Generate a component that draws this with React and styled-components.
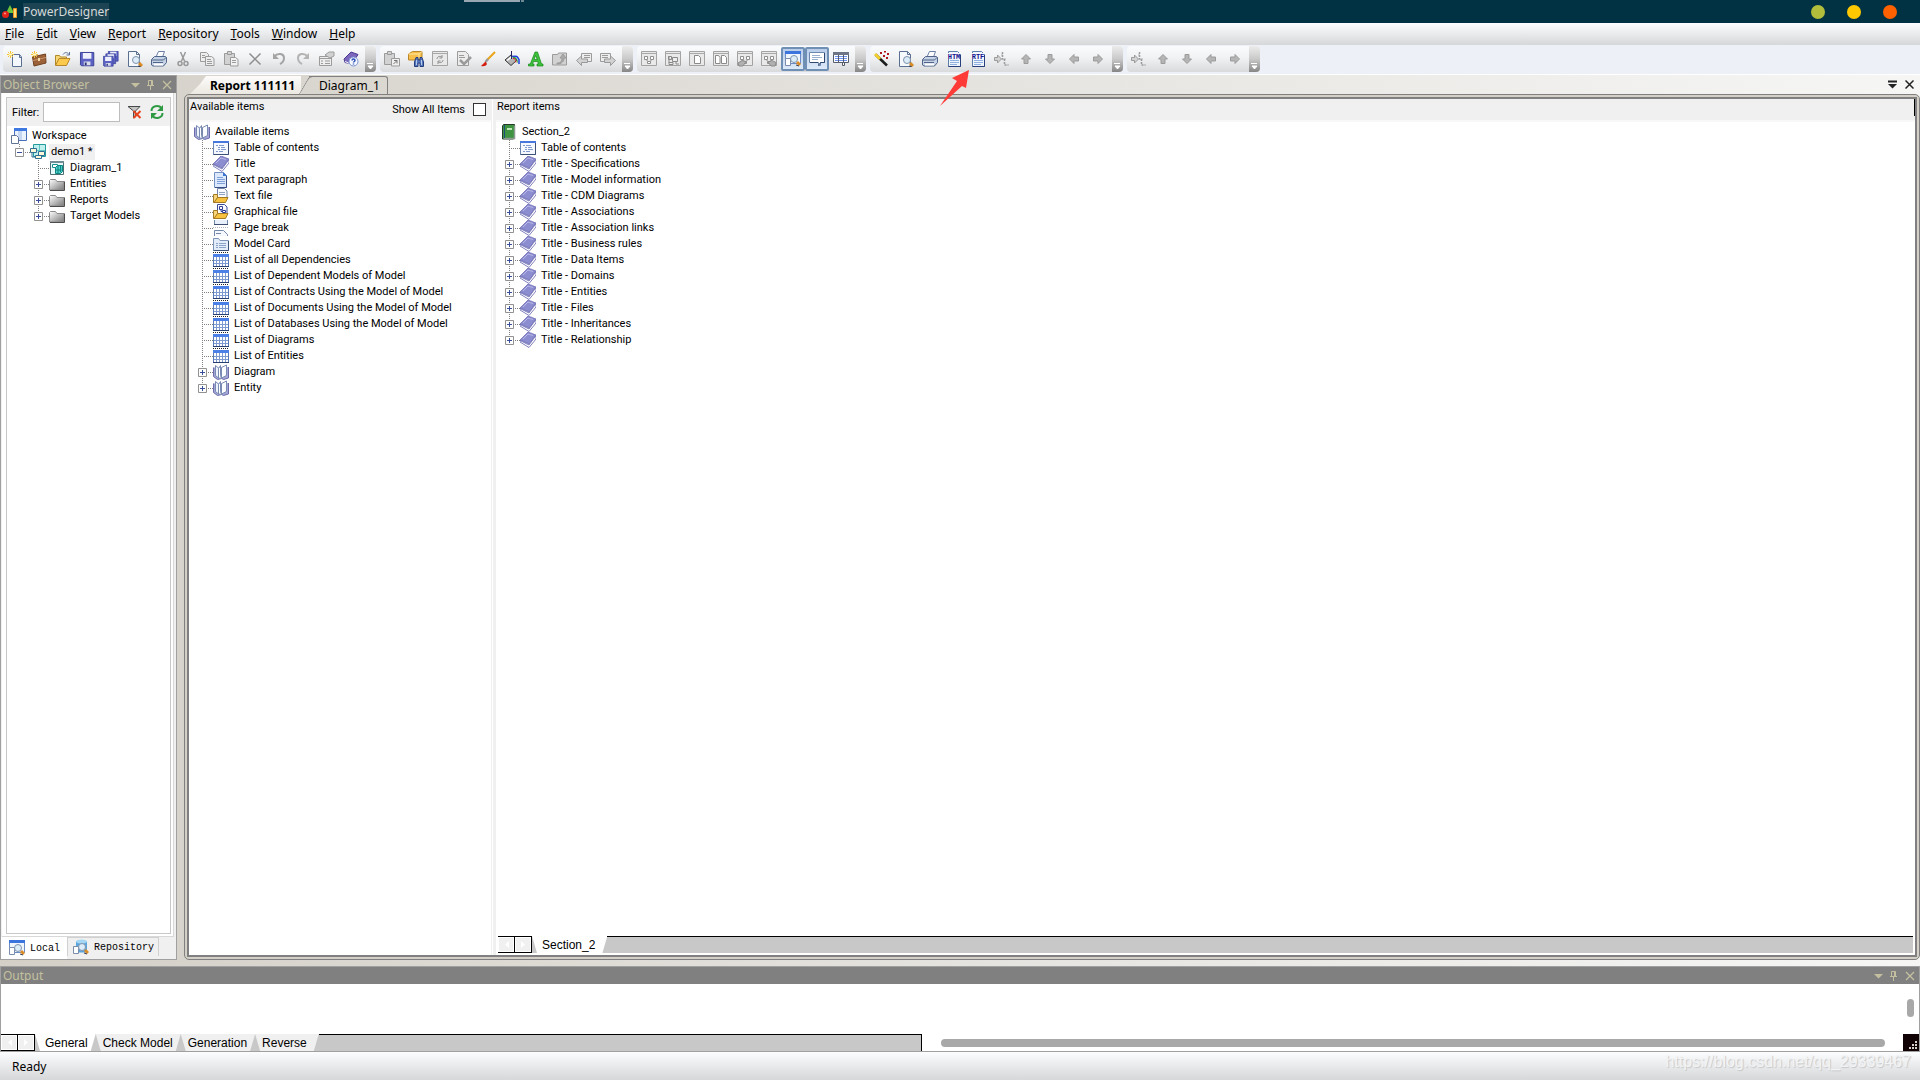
import { useState } from "react";
import styled, { createGlobalStyle, css } from "styled-components";

const GlobalStyle = createGlobalStyle`
  * {
    box-sizing: border-box;
  }
  body {
    margin: 0;
    overflow: hidden;
    background-color: #edf0f6;
    font-family: "Noto Sans", "Open Sans", sans-serif;
    font-size: 12px;
    color: #000;
  }
  button, input {
    font: inherit;
    color: inherit;
    margin: 0;
    padding: 0;
    border: none;
    background: none;
  }
  ul {
    list-style: none;
    margin: 0;
    padding: 0;
  }
  svg {
    display: block;
    flex: none;
  }
`;

const Wrapper = styled.div`
  position: relative;
  display: flex;
  flex-direction: column;
  min-height: 100vh;
`;

/* title bar */

const TitleBar = styled.header`
  display: flex;
  align-items: center;
  height: 23px;
  padding: 0 23px 0 2px;
  background-color: #003243;
  gap: 5px;
`;

const AppTitle = styled.h1`
  margin: 0 auto 0 0;
  font-size: 12px;
  line-height: 17px;
  font-weight: 400;
  color: #d5dadb;
  background-color: #1d4452;
`;

const Dots = styled.div`
  display: flex;
  gap: 22px;
`;

const Dot = styled.button`
  width: 14px;
  height: 14px;
  border-radius: 50%;
  background-color: ${({ $color }) => $color};
`;

const TopHandle = styled.span`
  position: absolute;
  top: 0;
  left: 464px;
  width: 60px;
  height: 2px;
  background: linear-gradient(90deg, #99a8b0 56px, #003243 56px 57px, #6c8791 57px);
`;

/* menu and tool bars */

const MenuBar = styled.nav`
  display: flex;
  align-items: center;
  height: 22px;
  background: linear-gradient(#fcfdfe, #d6d7d9);
`;

const MenuItem = styled.button`
  padding: 0 7px 0 5px;
  line-height: 22px;
`;

const ToolRow = styled.div`
  display: flex;
  gap: 4px;
  height: 30px;
  padding: 1px 3px 2px;
  border-bottom: 1px solid #fff;
`;

const ToolBar = styled.div`
  display: flex;
  align-items: center;
  border-radius: 4px;
  overflow: hidden;
  background: linear-gradient(#fafbfc, #f1f2f4 45%, #d9dadc);
`;

const ToolButton = styled.button`
  display: grid;
  place-items: center;
  width: 24px;
  height: 24px;
  ${({ $on }) =>
    $on &&
    css`
      border: 2px solid #6f8fb5;
      border-radius: 2px;
      background: linear-gradient(#b9cdea, #dce9f8);
    `}
`;

const Overflow = styled.button`
  display: grid;
  place-items: end center;
  align-self: stretch;
  width: 11px;
  margin-left: 2px;
  padding-bottom: 2px;
  background: linear-gradient(#ececec, #c9c9c9 50%, #868686);
`;

const RedArrow = styled.svg`
  position: absolute;
  left: 939px;
  top: 69px;
`;

/* main area */

const Main = styled.main`
  flex: 1;
  display: flex;
  gap: 7px;
  padding-bottom: 6px;
  background: linear-gradient(90deg, #d4d0c8, #f6f6f5);
`;

const Browser = styled.aside`
  display: flex;
  flex-direction: column;
  width: 177px;
  border: 1px solid #a0a0a0;
  background-color: #f0f0f0;
`;

const PanelHeader = styled.div`
  display: flex;
  align-items: center;
  height: 17px;
  padding: 0 4px 0 2px;
  background-color: #808080;
  color: #c4c09f;
  h2 {
    flex: 1;
    margin: 0;
    font-size: 12px;
    font-weight: 400;
    line-height: 17px;
  }
`;

const PanelButtons = styled.div`
  display: flex;
  align-items: center;
  gap: 6px;
`;

const BrowserBody = styled.div`
  flex: 1;
  display: flex;
  margin: 0 2px 0 1px;
  padding: 4px 2px 2px 4px;
  border-right: 1px solid #d8d8d8;
  border-bottom: 1px solid #d8d8d8;
  background-color: #fff;
`;

const BrowserBox = styled.div`
  flex: 1;
  border: 1px solid #c8c8c8;
`;

const FilterBar = styled.div`
  display: flex;
  align-items: center;
  height: 28px;
  padding-left: 5px;
  background-color: #f0f0f0;
  font-family: Roboto, "Liberation Sans", sans-serif;
  font-size: 11px;
  label {
    width: 31px;
  }
  input {
    width: 77px;
    height: 20px;
    margin-right: 7px;
    padding: 0 4px;
    border: 1px solid #bdbdbd;
    background-color: #fff;
  }
  button + button {
    margin-left: 6px;
  }
`;

const BrowserTabs = styled.div`
  display: flex;
  height: 22px;
`;

const BrowserTab = styled.button`
  display: flex;
  align-items: center;
  gap: 5px;
  padding: 0 4px 0 8px;
  font-family: "Liberation Mono", monospace;
  font-size: 10px;
  background-color: #fff;
  ${({ $active }) =>
    $active
      ? css`
          padding-right: 7px;
        `
      : css`
          margin-bottom: 3px;
          padding-left: 5px;
          border: solid #d0d0d0;
          border-width: 1px 1px 0 1px;
          background-color: #f0f0f0;
        `}
`;

/* trees */

const Tree = styled.ul`
  padding: 2px 0 0 ${({ $indent }) => $indent};
  font-family: Roboto, "Liberation Sans", sans-serif;
  font-size: 11px;
`;

const TreeRow = styled.li`
  display: flex;
  height: 16px;
  line-height: 16px;
  white-space: nowrap;
`;

const Branch = styled.span`
  display: flex;
  align-items: center;
  width: 19px;
  padding-left: 4px;
  ${({ $line, $last }) =>
    $line &&
    css`
      background-image: repeating-linear-gradient(#808080 0 1px, transparent 1px 2px),
        repeating-linear-gradient(90deg, #808080 0 1px, transparent 1px 2px);
      background-size: 1px ${$last ? "8px" : "100%"}, 11px 1px;
      background-position: 8px 0, 8px 8px;
      background-repeat: no-repeat;
    `}
`;

const Expander = styled.button`
  height: 9px;
  background-color: #fff;
`;

const Label = styled.span`
  margin-left: 3px;
  padding: 0 2px;
  background-color: ${({ $marked }) => ($marked ? "#f0f0f0" : "transparent")};
`;

/* document */

const Document = styled.section`
  flex: 1;
  display: flex;
  flex-direction: column;
  min-width: 0;
`;

const DocTabs = styled.div`
  display: flex;
  align-items: flex-end;
  height: 19px;
  padding: 0 6px;
`;

const ActiveTab = styled.button`
  height: 18px;
  padding: 0 6px 0 20px;
  line-height: 17px;
  font-weight: 700;
  background: linear-gradient(#fdfcfb, #ece8e1);
  clip-path: polygon(16px 0, 100% 0, 100% 100%, 0 100%, 10px 8px);
`;

const IdleTab = styled.button`
  position: relative;
  height: 18px;
  margin-left: 8px;
  padding: 0 7px 0 10px;
  line-height: 17px;
  border: solid #808080;
  border-width: 1px 1px 0 0;
  border-radius: 0 3px 0 0;
  &::before {
    content: "";
    position: absolute;
    top: -1px;
    left: -5px;
    width: 8px;
    height: 17px;
    border: solid #808080;
    border-width: 1px 0 0 1px;
    border-radius: 4px 0 0 0;
    transform: skewX(-30deg);
  }
`;

const DocTools = styled.div`
  display: flex;
  align-items: center;
  align-self: center;
  gap: 8px;
  margin-left: auto;
`;

const DocFrame = styled.div`
  flex: 1;
  display: flex;
  padding: 2px;
  border: 1px solid #808080;
  border-radius: 5px;
  background-color: #d4d0c8;
`;

const DocBody = styled.div`
  flex: 1;
  display: flex;
  border: 2px solid #808080;
  background-color: #fff;
`;

const Pane = styled.div`
  display: flex;
  flex-direction: column;
  ${({ $grow }) =>
    $grow
      ? css`
          flex: 1;
          border-left: 3px solid #f0f0f0;
        `
      : css`
          width: 303px;
          border-right: 1px solid #f0f0f0;
          margin-right: 1px;
        `}
`;

const PaneHeader = styled.div`
  display: flex;
  justify-content: space-between;
  height: 23px;
  padding-left: 1px;
  padding-right: ${({ $check }) => ($check ? "5px" : "0")};
  border-bottom: 2px solid #f8f8f8;
  background-color: #f0f0f0;
  font-family: Roboto, "Liberation Sans", sans-serif;
  font-size: 11px;
  line-height: 16px;
`;

const CheckLabel = styled.label`
  display: flex;
  align-items: center;
  gap: 8px;
  input {
    appearance: none;
    width: 13px;
    height: 13px;
    border: 1px solid #333;
    background-color: #fff;
    &:checked {
      background-color: #333;
      box-shadow: inset 0 0 0 2px #fff;
    }
  }
`;

const Caret = styled.span`
  width: 1px;
  height: 17px;
  background-color: #000;
`;

/* sheet tabs, shared by the report and the output */

const SheetBar = styled.div`
  display: flex;
  height: 17px;
  background-color: #c8c8c8;
  font-family: "Liberation Sans", Arial, sans-serif;
  ${Pane} & {
    margin: auto 2px 2px;
  }
`;

const SheetArrow = styled.button`
  display: grid;
  place-items: center;
  width: 17px;
  border: solid #000;
  border-width: 1px 1px 1px 0;
  background-color: #f0f0f0;
  box-shadow: inset 0 0 0 1px #fff;
`;

const SheetTab = styled.button`
  padding: 0 8px 0 7px;
  line-height: 18px;
  background-color: ${({ $active }) => ($active ? "#fff" : "#f0f0f0")};
  clip-path: polygon(0 0, 100% 0, calc(100% - 5px) 100%, 5px 100%);
  &:first-of-type {
    padding-left: 10px;
  }
  &:last-of-type {
    padding-right: 12px;
  }
`;

const SheetList = styled.div`
  display: flex;
`;

const SheetRest = styled.span`
  flex: 1;
  border-top: 1px solid #000;
  border-right: ${({ $end }) => ($end ? "1px solid #000" : "none")};
`;

/* output */

const Output = styled.section`
  border: 1px solid #a0a0a0;
  background-color: #fff;
`;

const OutputText = styled.div`
  display: flex;
  justify-content: flex-end;
  height: 50px;
  padding: 15px 5px;
`;

const Thumb = styled.span`
  border-radius: 4px;
  background-color: #a8a8a8;
  ${({ $vertical }) =>
    $vertical
      ? css`
          width: 7px;
          height: 18px;
        `
      : css`
          flex: 1;
          height: 8px;
          margin: 0 18px 0 19px;
        `}
`;

const OutputFooter = styled.div`
  display: flex;
  align-items: center;
  ${SheetBar} {
    width: 48%;
  }
`;

const StatusBar = styled.footer`
  display: flex;
  justify-content: space-between;
  height: 28px;
  padding: 0 9px 0 12px;
  line-height: 29px;
  background: linear-gradient(#fcfdfe, #d6d7d9);
`;

const Watermark = styled.span`
  font-family: "Liberation Sans", Arial, sans-serif;
  font-size: 16px;
  line-height: 20px;
  color: #f3f4f5;
  text-shadow: 1px 1px 1px #c4c6c8;
`;

/* icons */

const lens = (x, y) => (
  <>
    <path d={`M${x + 3} ${y + 3}l3 3`} stroke="#d98b25" strokeWidth="3" />
    <path d={`M${x + 2} ${y + 6}l3 1`} stroke="#3a3f55" strokeWidth="1" />
    <circle cx={x} cy={y} r="3.5" fill="#dcecf8" stroke="#8094ad" />
  </>
);

const spark = (
  <g stroke="#f2c230" strokeWidth="1">
    <path d="M3.5 0v7M0 3.5h7M1 1l5 5M6 1L1 6" />
    <path d="M2 3.5h3" stroke="#fff8c0" strokeWidth="2" />
  </g>
);

const win = (
  <>
    <path d="M.5 .5h15v14H.5z" fill="#e9e9e9" stroke="#a3a3a3" />
    <path d="M1 2.5h14" stroke="#a9a9a9" />
  </>
);

const winNodes = (
  <path
    d="M3.5 5.5h3v3h-3zM9.5 5.5h3v3h-3zM6.5 10.5h3v2h-3zM5 8.5l2 2M11 8.5l-2 2"
    fill="#fff"
    stroke="#8f8f8f"
  />
);

const floppy = (x, y, s) => (
  <g transform={`translate(${x} ${y}) scale(${s})`}>
    <path d="M.5 .5h14v14h-13l-1-1z" fill="#5b62c4" stroke="#373f94" />
    <path d="M3 1h9v6H3z" fill="#eef1fb" />
    <path d="M4 10h7v4H4z" fill="#d9dcea" />
    <path d="M5 11h2v3H5z" fill="#2d3374" />
  </g>
);

const arrows = {
  up: "M8 3.5l4.500 4.500h-2.500v4.500h-4v-4.500H3.500z",
  down: "M8 12.500l4.500-4.500h-2.500V3.500h-4V8H3.500z",
  left: "M3.500 8L8 3.500v2.500h4.500v4H8v2.500z",
  right: "M12.500 8L8 3.500v2.500H3.500v4H8v2.500z",
};

const docIcon = (text) => (
  <>
    <path d="M2.500 .5h9l3 3v12h-12z" fill="#eef4fc" stroke="#5f7ba8" />
    <path d="M14.500 4v11.500h-12" fill="none" stroke="#28417c" />
    <path d="M4 9.500h9M4 11.500h9M4 13.500h7" stroke="#8fb0e0" />
    <path d="M1 2h13v6H1z" fill="#f4f7fd" />
    <text x="8" y="8" textAnchor="middle" fontFamily="Liberation Mono, monospace" fontWeight="700" fontSize="7" fill="#15158c">
      {text}
    </text>
  </>
);

const gray = (children) => (
  <g fill="#d2d2d2" stroke="#9b9b9b">
    {children}
  </g>
);

const drawings = {
  logo: (
    <>
      <path d="M8 1l4 8H4z" fill="#6cc63a" />
      <circle cx="3.500" cy="10.500" r="3.500" fill="#e2231a" />
      <circle cx="3" cy="9.500" r="1" fill="#ff9a8a" />
      <path d="M11.500 4.500h3v9h-3z" fill="#ffe27a" stroke="#f0941e" />
    </>
  ),
  newFile: (
    <>
      <path d="M5.500 3.500h7l2 2.500v9.500h-9z" fill="#f4f8fd" stroke="#5a6f94" />
      <path d="M12.500 3.500v3h2" fill="none" stroke="#5a6f94" />
      {spark}
    </>
  ),
  briefcase: (
    <>
      <path d="M1.500 6l13-3 .5 9-12 3z" fill="#9c6239" stroke="#70401f" />
      <path d="M2 9.500l13-3" stroke="#c99468" />
      <path d="M8 7v3" stroke="#f3d9a6" strokeWidth="2" />
      {spark}
    </>
  ),
  open: (
    <>
      <path d="M.5 14V4.500h4l1 1.500h6V8" fill="#f7d774" stroke="#b28727" />
      <path d="M.5 14.500L4 7.500h11l-3.500 7z" fill="#fbc94b" stroke="#b9872b" />
      <path d="M8 3.500c2-3 5-2 6 0M14.500 1v3h-3" fill="none" stroke="#5a7096" />
    </>
  ),
  save: floppy(1, 1, 0.95),
  saveAll: (
    <>
      {floppy(5, 0, 0.7)}
      {floppy(2.5, 2.5, 0.7)}
      {floppy(0, 5, 0.7)}
    </>
  ),
  preview: (
    <>
      <path d="M1.500 .5h8l3 3v12h-11z" fill="#f5f8fc" stroke="#5b7090" />
      <path d="M9.500 .5v3h3" fill="none" stroke="#5b7090" />
      {lens(9, 9)}
    </>
  ),
  print: (
    <>
      <path d="M5 6l2.500-5.500h6L11.500 6z" fill="#fff" stroke="#6b7fa6" />
      <path d="M.5 8.500l3-3h11l1 1v5l-3 3.500H2l-1.500-1z" fill="#c5d2e6" stroke="#4f6488" />
      <path d="M1 9h11.500l3-3M2 11.500h10" fill="none" stroke="#4f6488" />
      <path d="M3 13.500h9" stroke="#fff" strokeWidth="2" />
    </>
  ),
  cut: (
    <g fill="none" stroke="#999" strokeWidth="1.500">
      <path d="M5.500 1l4 9M10.500 1l-4 9" />
      <circle cx="5" cy="12.500" r="2" />
      <circle cx="11" cy="12.500" r="2" />
    </g>
  ),
  copy: gray(
    <>
      <path d="M1.500 1.500h6l2 2v7h-8z" fill="#eee" />
      <path d="M6.500 5.500h6l2.500 2v7H6.500z" fill="#eee" />
      <path d="M3 4.500h3M3 6.500h3M8 8.500h4M8 10.500h5M8 12.500h5" />
    </>
  ),
  paste: gray(
    <>
      <path d="M1.500 2.500h10v11h-10z" />
      <path d="M4.500 .5h4v3h-4z" />
      <path d="M7.500 6.500h5l2.500 2v6.500H7.500z" fill="#f2f2f2" />
      <path d="M9 9.500h4M9 11.500h4" />
    </>
  ),
  remove: <path d="M2.500 2.500l11 11M13.500 2.500l-11 11" stroke="#8e8e8e" strokeWidth="1.500" />,
  undo: (
    <>
      <path d="M3 5.500c4-4 10-3 10 1.500 0 3-2 5-4 6" fill="none" stroke="#a4a4a4" strokeWidth="2" />
      <path d="M2 2v6h6z" fill="#a4a4a4" />
    </>
  ),
  redo: (
    <>
      <path d="M13 5.500c-4-4-10-3-10 1.500 0 3 2 5 4 6" fill="none" stroke="#b4b4b4" strokeWidth="2" />
      <path d="M14 2v6H8z" fill="#b4b4b4" />
    </>
  ),
  properties: gray(
    <>
      <path d="M.5 5.500h12v9H.5z" fill="#eee" />
      <path d="M.5 7.500h12M2 10h2M6 10h5M2 12.500h2M6 12.500h5" />
      <path d="M6 4l4-3h5v4l-4 2z" />
    </>
  ),
  help: (
    <>
      <path d="M1 8l7-7 7 2.500-6 9.500-7-1.500z" fill="#7b68bd" stroke="#4b3b92" />
      <path d="M2 10.500l7 3 5-7" fill="none" stroke="#fff" />
      <circle cx="10.500" cy="10.500" r="4.500" fill="#f5f8ff" stroke="#7892cf" />
      <path d="M9 9.500c0-2 3-2 3 0 0 1-1.500 1-1.500 2M10.500 12.500v1" fill="none" stroke="#2b50b8" strokeWidth="1.500" />
    </>
  ),
  shortcut: gray(
    <>
      <path d="M.5 2.500h10v11H.5z" />
      <path d="M3.500 .5h4v3h-4z" />
      <path d="M7.500 7.500h8v7.500h-8z" fill="#f0f0f0" />
      <path d="M9.500 13l3.500-3.500M10 9.500h3v3" fill="none" stroke="#777" />
    </>
  ),
  find: (
    <>
      <path d="M.5 3l4-2.500h9.500v6L11 9H.5z" fill="#f8c04a" stroke="#b8862c" />
      <path d="M.5 3h10.500l3-2.500M11 3v5" fill="none" stroke="#ffe9a6" />
      <path d="M6.500 15.500V11L8 6.500h2V9h2V6.500h2l1.500 4.500v4.500h-3.500V12h-2v3.500z" fill="#5478c0" stroke="#263f7c" />
      <path d="M8.500 9v5M13.500 9v5" stroke="#b5c9ed" />
    </>
  ),
  refreshWin: (
    <>
      {win}
      <path d="M5 8c0-3 4-3 5-2M11 9c0 3-4 3-5 2M10 4v3H7.500M6 13v-3h2.500" fill="none" stroke="#919191" />
    </>
  ),
  check: gray(
    <>
      <path d="M1.500 .5h8l3 3v11h-11z" fill="#ececec" />
      <path d="M3 4.500h5M3 6.500h6" />
      <path d="M4 9l4 4 7-7" fill="none" strokeWidth="2.500" />
    </>
  ),
  brush: (
    <>
      <path d="M15 1L7 9" stroke="#eaa417" strokeWidth="2" />
      <path d="M8 8l-2.500 3" stroke="#9a9a9a" strokeWidth="2.500" />
      <path d="M5.500 10.500L1 15c3 .5 5 0 6-2z" fill="#d51e12" />
    </>
  ),
  fill: (
    <>
      <path d="M1 9l6-5 6 5-6 5.500z" fill="#b4b4b4" stroke="#333" />
      <path d="M3 9.500l5-4" stroke="#fff" strokeWidth="1.500" />
      <path d="M7.500 0v8" stroke="#222266" />
      <path d="M8.500 5.500c4-1 5 0 6.500 3v4.500" fill="none" stroke="#1e3fe0" strokeWidth="1.500" />
      <path d="M9 6.500c3-.5 4 1 4.500 5" fill="none" stroke="#22b14c" />
      <path d="M9 7.500c2 0 3 1 3 4" fill="none" stroke="#e0241e" />
    </>
  ),
  font: (
    <path
      d="M7 1h2.500l4 12H15v2H9v-2h1.500l-.8-2.500H5.500L4.500 13H6v2H.5v-2h1.800zm.5 3.500L6.200 8.500h3z"
      fill="#3fc13c"
      stroke="#168a1a"
      strokeWidth=".7"
    />
  ),
  folderUp: gray(
    <>
      <path d="M.5 3.500h5l1-1.500h8v12H.5z" />
      <path d="M5 12c4 0 5-2 5-5H8l3-4 3 4h-2c0 4-3 6-7 6z" fill="#aaa" />
    </>
  ),
  back: gray(
    <>
      <path d="M5.500 2.500h10v8h-10z" fill="#eee" />
      <path d="M8 4.500h6M8 6.500h6" />
      <path d="M.5 9.500l5-4.500v3h6v3.500h-6v3z" />
    </>
  ),
  forward: gray(
    <>
      <path d="M.5 2.500h10v8H.5z" fill="#eee" />
      <path d="M2 4.500h6M2 6.500h6" />
      <path d="M15.500 9.500l-5-4.500v3h-6v3.500h6v3z" />
    </>
  ),
  winA: (
    <>
      {win}
      {winNodes}
    </>
  ),
  winB: (
    <>
      {win}
      <path d="M4 5v7M3.500 5.500h3v3h-3zM7.500 6.500h5v4h-5zM11 10v3h3M4 11.500h4v2H4z" fill="#eee" stroke="#8a8a8a" />
    </>
  ),
  winC: (
    <>
      {win}
      <path d="M5.500 4.500h4l2 2v6h-6z" fill="#fff" stroke="#8a8a8a" />
    </>
  ),
  winD: (
    <>
      {win}
      <path d="M2.500 4.500h3l1.500 2v6H2.500zM8.500 4.500h3l2 2v6h-5z" fill="#fff" stroke="#8a8a8a" />
    </>
  ),
  winE: (
    <>
      {win}
      {winNodes}
      <path d="M1 12l4-2.500 4 1-3 4.500H2z" fill="#b0b0b0" stroke="#8a8a8a" />
    </>
  ),
  winF: (
    <>
      {win}
      {winNodes}
      <path d="M7 11l4-1.500 4 2-1 3.500h-4z" fill="#b0b0b0" stroke="#8a8a8a" />
    </>
  ),
  browser: (
    <>
      <path d="M.5 .5h15v12H.5z" fill="#eff5fd" stroke="#6b8bc4" />
      <path d="M0 0h16v3H0z" fill="#3a74dc" />
      <path d="M.5 7.500h5v7h-5z" fill="#fff" stroke="#7a8dad" />
      {lens(9, 8)}
    </>
  ),
  note: (
    <>
      <path d="M.5 1.500h15v10h-4v3h-2v-3h-9z" fill="#fff" stroke="#6b86ad" />
      <path d="M15.500 2v9.500h-4l-2 3M1 11.500h8" fill="none" stroke="#30476f" />
      <path d="M3 4.500h8M3 6.500h10M3 8.500h6" stroke="#9ab0cf" />
    </>
  ),
  grid: (
    <>
      <path d="M.5 1.500h15v10h-4v3h-2v-3h-9z" fill="#fff" stroke="#555c6c" />
      <path d="M0 1h16v3H0z" fill="#6d7486" />
      <path d="M2 5.500h12M2 7.500h12M2 9.500h12" stroke="#6f93ee" />
      <path d="M1 11.500h14M5.500 4v8M10.500 4v8" stroke="#555c6c" />
    </>
  ),
  wand: (
    <>
      <path d="M1.500 3.500L13 14.500" stroke="#1c1c1c" strokeWidth="2.500" />
      <path d="M1 3l5 5" stroke="#f3cf2c" strokeWidth="3" />
      <path d="M6 2h2M10 0.500h2M9 5h2M13 3h2M12 7h2" stroke="#b3181d" strokeWidth="2" />
    </>
  ),
  htm: docIcon("HTM"),
  rtf: docIcon("RTF"),
  insert: gray(
    <>
      <path d="M7.500 8L3.500 4v2.500H.5v3h3V12z" />
      <path d="M8.500 1v3h-1M8.500 4v4h3M10.500 8v6h4" fill="none" strokeDasharray="2 1" strokeWidth="1.500" />
    </>
  ),
  up: gray(<path d={arrows.up} fill="#b5b5b5" />),
  down: gray(<path d={arrows.down} fill="#b5b5b5" />),
  left: gray(<path d={arrows.left} fill="#b5b5b5" />),
  right: gray(<path d={arrows.right} fill="#b5b5b5" />),
  clearFilter: (
    <>
      <path d="M1 2.500h12L8.500 7v6l-2 1V7z" fill="#c4c4c4" stroke="#4a4a4a" />
      <path d="M6.500 7l7 7M13.500 7l-7 7" stroke="#e8451f" strokeWidth="2" />
    </>
  ),
  refresh: (
    <>
      <path d="M2.500 7c0-5 7-6.500 10-3" fill="none" stroke="#2f9a44" strokeWidth="2" />
      <path d="M13.500 9c0 5-7 6.500-10 3" fill="none" stroke="#2f9a44" strokeWidth="2" />
      <path d="M14 1v6H8zM2 15V9h6z" fill="#2f9a44" />
    </>
  ),
  workspace: (
    <>
      <path d="M3.500 .5h12v12h-12z" fill="#eaf2fd" stroke="#4a6fb8" />
      <path d="M3 0h13v3H3z" fill="#3f78e0" />
      <path d="M7 3h4v9H7z" fill="#c5d7f2" />
      <path d="M.5 7.500h5l2 2v6h-7z" fill="#fff" stroke="#5f7496" />
    </>
  ),
  model: (
    <>
      <path d="M3.500 .5h12v12h-12z" fill="#bff0ee" stroke="#239b9b" />
      <path d="M9.500 1v11M4 6.500h11" stroke="#5fc5c4" />
      <path d="M.5 4.500h6v4h-6zM8.500 7.500h6v4h-6zM5.500 11.500h6v3h-6z" fill="#fff8d8" stroke="#2f6f94" />
      <path d="M2 9v4h3" fill="none" stroke="#2f6f94" />
    </>
  ),
  diagram: (
    <>
      <path d="M1.500 1.500h13v13h-13z" fill="#e8fbfa" stroke="#4c6e74" />
      <path d="M1 1h14v2H1z" fill="#738d94" />
      <path d="M3.500 4.500h5v3h-5z" fill="#fff" stroke="#16908c" />
      <path d="M6.500 7.500l2-2h5v6l-2 2h-5z" fill="#4bd1ca" stroke="#0e8480" />
      <path d="M6.500 10h6M9 6v7M11.500 6v6" stroke="#0e8480" />
    </>
  ),
  folder: (
    <>
      <path d="M.5 14V4.500l1-1h5l1.500 2h7V14z" fill="url(#folderShade)" stroke="#8b8b8b" />
      <path d="M15.500 5.500V14.500H1" fill="none" stroke="#4c4c4c" />
    </>
  ),
  book: (
    <>
      <path d="M.5 3.500v9l4 3 4-1 2 1 5-1.500V3" fill="#a5a6d6" stroke="#6b6dac" />
      <path d="M2.500 1.500l3 2.500v10l-3-2.500z" fill="#eef2fb" stroke="#7a8bb2" />
      <path d="M5.500 4.500l2-3v10l1 3-3-.5z" fill="#fff" stroke="#7a8bb2" />
      <path d="M8.500 3.500l5-2.500v10.500l-5 2.500z" fill="#fafcff" stroke="#7a8bb2" />
    </>
  ),
  contents: (
    <>
      <path d="M.5 1.500h15v13H.5z" fill="#f5f9ff" stroke="#6a85b0" />
      <path d="M0 1h16v2H0z" fill="#4677dc" />
      <path d="M15.500 3v11.500H.5" fill="none" stroke="#3b4f77" />
      <path d="M3 5.500h2M6 5.500h5M5 7.500h2M8 7.500h4M5 9.500h2M8 9.500h5M3 11.500h2M6 11.500h4" stroke="#7f9acb" />
    </>
  ),
  title: (
    <>
      <path d="M0 8L8 0l8 3-7 9z" fill="#8c8cd0" stroke="#6262ad" strokeWidth=".7" />
      <path d="M3 7l5-5 5 1.500" fill="none" stroke="#b9b9e8" />
      <path d="M0 8.500l9 4.500 7-9.500V7l-7 8.500L0 10z" fill="#fff" stroke="#6262ad" strokeWidth=".8" />
    </>
  ),
  paragraph: (
    <>
      <path d="M1.500 .5h9l3 3v12h-12z" fill="#dce9fc" stroke="#7390c4" />
      <path d="M13.500 4v11.500H2" fill="none" stroke="#394f86" />
      <path d="M10 0l4 4h-4z" fill="#3e74d2" />
      <path d="M4 5.500h6M4 7.500h8M4 9.500h8M4 11.500h8" stroke="#7f9fd8" />
    </>
  ),
  textFile: (
    <>
      <path d="M4.500 .5h7l2.500 2.500v8H4.500z" fill="#f8fafd" stroke="#7287a8" />
      <path d="M6 4.500h6M6 6.500h6" stroke="#8ea1bd" />
      <path d="M.5 14.500V6.500h4v3L3 14z" fill="#f8d57a" stroke="#a47a24" />
      <path d="M1 14.500L4.500 9.500h10.500l-2.500 5z" fill="#f6c23f" stroke="#a47a24" />
    </>
  ),
  graphicFile: (
    <>
      <path d="M4.500 .5h7l2.500 2.500v8H4.500z" fill="#f8fafd" stroke="#384c9a" />
      <path d="M6.500 2.500h3v3h-3zM9.500 6.500h3v2h-3zM8 5.500v2h2" fill="#fff" stroke="#2b3b96" />
      <path d="M.5 14.500V6.500h4v3L3 14z" fill="#f8d57a" stroke="#a47a24" />
      <path d="M1 14.500L4.500 9.500h10.500l-2.500 5z" fill="#f6c23f" stroke="#a47a24" />
    </>
  ),
  pageBreak: (
    <>
      <path d="M1.500 0v4.500h13V0" fill="#e8f0fb" stroke="#7387a8" />
      <path d="M1 4.500h14" stroke="#3d4e72" />
      <path d="M0 7.500h16" stroke="#aeb4bf" strokeDasharray="1 1" />
      <path d="M1.500 16v-5.500h9l4 4V16" fill="#f5f8fc" stroke="#7387a8" />
      <path d="M3 13.500h5" stroke="#7387a8" />
    </>
  ),
  card: (
    <>
      <path d="M.5 14.500V2.500h5l1.500 2h8.500v10z" fill="#e3edfa" stroke="#7d93b8" />
      <path d="M15.500 5v9.500H.5" fill="none" stroke="#3b4f77" />
      <path d="M3 7.500h2M6 7.500h7M3 9.500h2M6 9.500h7M3 11.500h2M6 11.500h7" stroke="#8ba3cb" />
    </>
  ),
  list: (
    <>
      <path d="M0 .5h16" stroke="#222" strokeDasharray="1 1" />
      <path d="M.5 2.500h15v12H.5z" fill="#fff" stroke="#5878b8" />
      <path d="M0 2h16v3H0z" fill="#4b80e6" />
      <path d="M1 8.500h14M1 11.500h14M3.500 5v10M6.500 5v10M9.500 5v10M12.500 5v10" stroke="#7d9bd0" />
      <path d="M0 14.500h16" stroke="#27406f" />
    </>
  ),
  section: (
    <>
      <path d="M1.500 2l1-1.500h11v13l-1 1.500h-11z" fill="#3f9442" stroke="#243a2a" />
      <path d="M13.500 1.500v13h-11" fill="none" stroke="#8d9a90" strokeWidth="1.500" />
      <path d="M3.500 1v13" stroke="#1c4f7a" />
      <path d="M6 4h5v2H6z" fill="#bfe6b6" />
    </>
  ),
  repository: (
    <>
      <path d="M3 2.500v11h11v-11z" fill="#5aa5dc" />
      <ellipse cx="8.500" cy="2.500" rx="5.500" ry="2" fill="#a5d6f3" />
      <path d="M.5 7.500h5v7h-5z" fill="#fff" stroke="#7a8dad" />
      {lens(9, 8)}
    </>
  ),
};

function Icon({ name }) {
  return (
    <svg width="16" height="16" viewBox="0 0 16 16" fill="none" aria-hidden="true">
      {drawings[name]}
    </svg>
  );
}

const toolBars = [
  ["newFile", "briefcase", "open", "save", "saveAll", "preview", "print", "cut", "copy", "paste", "remove", "undo", "redo", "properties", "help"],
  ["shortcut", "find", "refreshWin", "check", "brush", "fill", "font", "folderUp", "back", "forward"],
  ["winA", "winB", "winC", "winD", "winE", "winF", "browser", "note", "grid"],
  ["wand", "preview", "print", "htm", "rtf", "insert", "up", "down", "left", "right"],
  ["insert", "up", "down", "left", "right"],
];

const pressed = ["browser", "note"];

const menus = ["File", "Edit", "View", "Report", "Repository", "Tools", "Window", "Help"];

const browserRows = [
  { icon: "workspace", text: "Workspace", level: 0 },
  { icon: "model", text: "demo1 *", level: 1, box: "minus", last: true, marked: true },
  { icon: "diagram", text: "Diagram_1", level: 2 },
  { icon: "folder", text: "Entities", level: 2, box: "plus" },
  { icon: "folder", text: "Reports", level: 2, box: "plus" },
  { icon: "folder", text: "Target Models", level: 2, box: "plus", last: true },
];

const availableRows = [
  { icon: "book", text: "Available items", level: 0 },
  { icon: "contents", text: "Table of contents", level: 1 },
  { icon: "title", text: "Title", level: 1 },
  { icon: "paragraph", text: "Text paragraph", level: 1 },
  { icon: "textFile", text: "Text file", level: 1 },
  { icon: "graphicFile", text: "Graphical file", level: 1 },
  { icon: "pageBreak", text: "Page break", level: 1 },
  { icon: "card", text: "Model Card", level: 1 },
  ...[
    "List of all Dependencies",
    "List of Dependent Models of Model",
    "List of Contracts Using the Model of Model",
    "List of Documents Using the Model of Model",
    "List of Databases Using the Model of Model",
    "List of Diagrams",
    "List of Entities",
  ].map((text) => ({ icon: "list", text, level: 1 })),
  { icon: "book", text: "Diagram", level: 1, box: "plus" },
  { icon: "book", text: "Entity", level: 1, box: "plus", last: true },
];

const titles = [
  "Specifications",
  "Model information",
  "CDM Diagrams",
  "Associations",
  "Association links",
  "Business rules",
  "Data Items",
  "Domains",
  "Entities",
  "Files",
  "Inheritances",
  "Relationship",
];

const reportRows = [
  { icon: "section", text: "Section_2", level: 0 },
  { icon: "contents", text: "Table of contents", level: 1 },
  ...titles.map((text, index) => ({
    icon: "title",
    text: `Title - ${text}`,
    level: 1,
    box: "plus",
    last: index === titles.length - 1,
  })),
];

function TreeView({ rows, indent }) {
  return (
    <Tree $indent={indent}>
      {rows.map((row) => (
        <TreeRow key={row.text}>
          {row.level > 1 && <Branch />}
          {row.level > 0 && (
            <Branch $line $last={row.last}>
              {row.box && (
                <Expander aria-label={row.text}>
                  <svg width="9" height="9">
                    <path d="M.5 .5h8v8h-8z" fill="#fff" stroke="#919191" />
                    <path d={row.box === "plus" ? "M2 4.500h5M4.500 2v5" : "M2 4.500h5"} stroke="#3a4f9a" />
                  </svg>
                </Expander>
              )}
            </Branch>
          )}
          <Icon name={row.icon} />
          <Label $marked={row.marked}>{row.text}</Label>
        </TreeRow>
      ))}
    </Tree>
  );
}

function PanelTitle({ title }) {
  return (
    <PanelHeader>
      <h2>{title}</h2>
      <PanelButtons>
        <button aria-label="Menu">
          <svg width="9" height="10">
            <path d="M0 3h9L4.500 7.500z" fill="#c4c09f" />
          </svg>
        </button>
        <button aria-label="Pin">
          <svg width="9" height="11">
            <path d="M2.500 6.500v-5h4v5M5.500 1v6M1 6.500h7M4.500 7v4" fill="none" stroke="#c4c09f" />
          </svg>
        </button>
        <button aria-label="Close">
          <svg width="11" height="10">
            <path d="M2 1l8 8M10 1L2 9" stroke="#c4c09f" strokeWidth="1.300" />
          </svg>
        </button>
      </PanelButtons>
    </PanelHeader>
  );
}

function Sheets({ names, end }) {
  const [active, setActive] = useState(names[0]);
  return (
    <SheetBar>
      <SheetArrow aria-label="Previous">
        <svg width="5" height="7">
          <path d="M5 0v7L1 3.500z" fill="#fff" />
        </svg>
      </SheetArrow>
      <SheetArrow aria-label="Next">
        <svg width="5" height="7">
          <path d="M0 0v7l4-3.500z" fill="#fff" />
        </svg>
      </SheetArrow>
      <SheetList>
        {names.map((name) => (
          <SheetTab key={name} $active={name === active} onClick={() => setActive(name)}>
            {name}
          </SheetTab>
        ))}
      </SheetList>
      <SheetRest $end={end} />
    </SheetBar>
  );
}

export default function App() {
  const [filter, setFilter] = useState("");
  const [showAll, setShowAll] = useState(false);

  return (
    <>
      <GlobalStyle />
      <Wrapper>
        <TopHandle />
        <TitleBar>
          <Icon name="logo" />
          <AppTitle>PowerDesigner</AppTitle>
          <Dots>
            <Dot $color="#b2bd3c" aria-label="Minimize" />
            <Dot $color="#ffc800" aria-label="Maximize" />
            <Dot $color="#ff6000" aria-label="Close" />
          </Dots>
        </TitleBar>
        <MenuBar>
          {menus.map((menu) => (
            <MenuItem key={menu}>
              <u>{menu[0]}</u>
              {menu.slice(1)}
            </MenuItem>
          ))}
        </MenuBar>
        <ToolRow>
          {toolBars.map((icons, index) => (
            <ToolBar key={index}>
              {icons.map((name) => (
                <ToolButton key={name} $on={pressed.includes(name)} aria-label={name}>
                  <Icon name={name} />
                </ToolButton>
              ))}
              <Overflow aria-label="More">
                <svg width="7" height="7">
                  <path d="M0 .5h6M1 3h5L3.500 6z" fill="#fff" stroke="#fff" />
                </svg>
              </Overflow>
            </ToolBar>
          ))}
        </ToolRow>
        <RedArrow width="30" height="38" viewBox="0 0 30 38">
          <defs>
            <linearGradient id="folderShade" x1="0" y1="0" x2="1" y2="1">
              <stop offset="0" stopColor="#fff" />
              <stop offset="1" stopColor="#777" />
            </linearGradient>
          </defs>
          <path d="M30 1L13 9l5 3L1 37l22-20 4 2z" fill="#ff3b38" />
        </RedArrow>

        <Main>
          <Browser>
            <PanelTitle title="Object Browser" />
            <BrowserBody>
              <BrowserBox>
                <FilterBar>
                  <label htmlFor="filter">Filter:</label>
                  <input id="filter" value={filter} onChange={(e) => setFilter(e.target.value)} />
                  <button aria-label="Clear filter">
                    <Icon name="clearFilter" />
                  </button>
                  <button aria-label="Refresh">
                    <Icon name="refresh" />
                  </button>
                </FilterBar>
                <TreeView rows={browserRows} indent="4px" />
              </BrowserBox>
            </BrowserBody>
            <BrowserTabs>
              <BrowserTab $active>
                <Icon name="browser" />
                Local
              </BrowserTab>
              <BrowserTab>
                <Icon name="repository" />
                Repository
              </BrowserTab>
            </BrowserTabs>
          </Browser>

          <Document>
            <DocTabs>
              <ActiveTab>Report 111111</ActiveTab>
              <IdleTab>Diagram_1</IdleTab>
              <DocTools>
                <button aria-label="Windows">
                  <svg width="9" height="9">
                    <path d="M0 1.500h9" stroke="#222" strokeWidth="2" />
                    <path d="M0 4h9L4.500 8.500z" fill="#222" />
                  </svg>
                </button>
                <button aria-label="Close document">
                  <svg width="9" height="9">
                    <path d="M.5 .5l8 8M8.500 .5l-8 8" stroke="#222" strokeWidth="1.500" />
                  </svg>
                </button>
              </DocTools>
            </DocTabs>
            <DocFrame>
              <DocBody>
                <Pane>
                  <PaneHeader $check>
                    <span>Available items</span>
                    <CheckLabel>
                      Show All Items
                      <input type="checkbox" checked={showAll} onChange={(e) => setShowAll(e.target.checked)} />
                    </CheckLabel>
                  </PaneHeader>
                  <TreeView rows={availableRows} indent="5px" />
                </Pane>
                <Pane $grow>
                  <PaneHeader>
                    <span>Report items</span>
                    <Caret />
                  </PaneHeader>
                  <TreeView rows={reportRows} indent="5px" />
                  <Sheets names={["Section_2"]} />
                </Pane>
              </DocBody>
            </DocFrame>
          </Document>
        </Main>

        <Output>
          <PanelTitle title="Output" />
          <OutputText>
            <Thumb $vertical />
          </OutputText>
          <OutputFooter>
            <Sheets names={["General", "Check Model", "Generation", "Reverse"]} end />
            <Thumb />
            <svg width="16" height="17">
              <path d="M0 0h16v17H0z" fill="#100204" />
              <path d="M12 7h2v2h-2zM9 10h2v2H9zM12 10h2v2h-2zM6 13h2v2H6zM9 13h2v2H9zM12 13h2v2h-2z" fill="#d4d0c8" />
            </svg>
          </OutputFooter>
        </Output>
        <StatusBar>
          <span>Ready</span>
          <Watermark>https://blog.csdn.net/qq_29339467</Watermark>
        </StatusBar>
      </Wrapper>
    </>
  );
}
